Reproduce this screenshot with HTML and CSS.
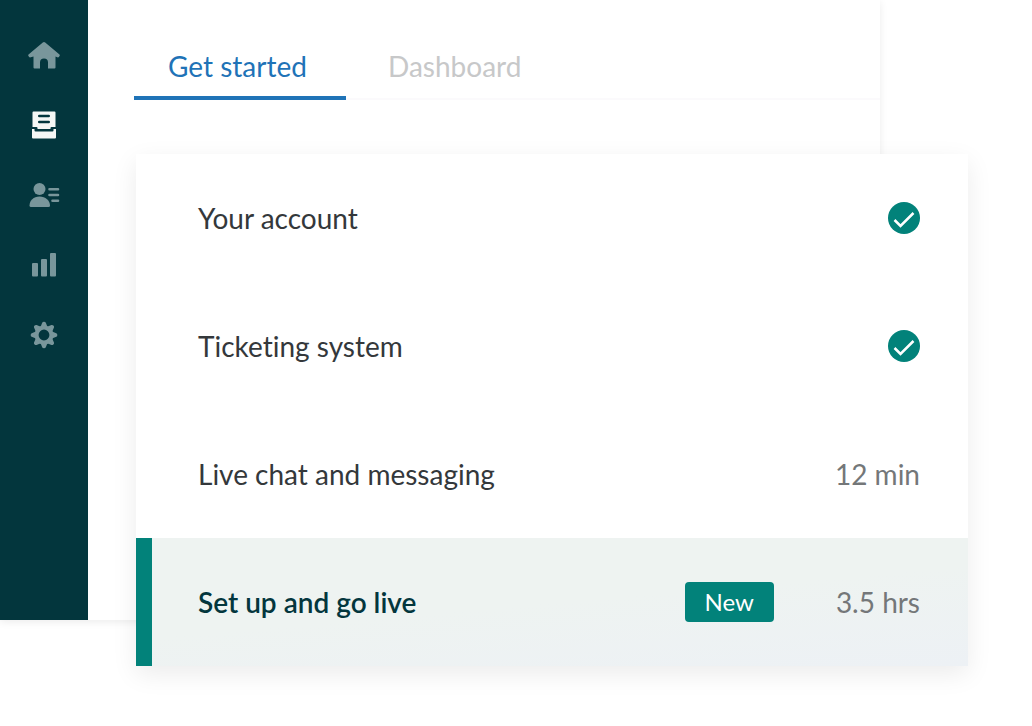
FILE: index.html
```html
<!DOCTYPE html>
<html lang="en">
<head>
  <meta charset="UTF-8">
  <meta name="viewport" content="width=device-width, initial-scale=1">
  <title>Get started</title>
  <link rel="stylesheet" href="styles.css">
</head>
<body>
  <div class="stage">
    <div class="window">
      <nav class="sidebar" aria-label="Main">
        <a href="#" aria-label="Home">
          <svg viewBox="0 0 40 40"><path d="M18.800 7.400Q20 6.400 21.200 7.400L35.500 19.500Q36.300 20.300 35.500 21.100L34.900 22Q34.200 22.700 33.300 22.300L31.500 21.500V32.500Q31.500 33.500 30.500 33.500H24V27.500Q24 23.500 20 23.500T16 27.500V33.500H10.500Q9.500 33.500 9.500 32.500V21.500L6.700 22.300Q5.800 22.700 5.100 22L4.500 21.100Q3.700 20.300 4.500 19.500Z"/></svg>
        </a>
        <a href="#" class="active" aria-label="Tickets">
          <svg viewBox="0 0 40 40">
            <path fill-rule="evenodd" d="M9.500 6.500H30.500Q31.500 6.500 31.500 7.500V22H27.500Q26.500 22 26.500 23V24H13.500V23Q13.500 22 12.500 22H8.500V7.500Q8.500 6.500 9.500 6.500ZM15.200 9.800A1.200 1.200 0 0 0 15.200 12.200H24.800A1.200 1.200 0 0 0 24.800 9.800ZM15.200 15.800A1.200 1.200 0 0 0 15.200 18.200H24.800A1.200 1.200 0 0 0 24.800 15.800Z"/>
            <path d="M8 24H10.500V25.500Q10.500 26.500 11.500 26.500H28.500Q29.500 26.500 29.500 25.500V24H32V32.500Q32 33.500 31 33.500H9Q8 33.500 8 32.500Z"/>
          </svg>
        </a>
        <a href="#" aria-label="Customers">
          <svg viewBox="0 0 40 40">
            <circle cx="15.500" cy="14" r="6"/>
            <path d="M5.500 30.500C5.500 25.500 9.500 21.500 15.500 21.500S26 25.500 26 30.500Q26 32 24.500 32H7Q5.500 32 5.500 30.500Z"/>
            <path class="line" d="M25.500 14.200H34M25.500 20H34M28.500 25.700H34"/>
          </svg>
        </a>
        <a href="#" aria-label="Reporting">
          <svg viewBox="0 0 40 40">
            <rect x="8" y="18" width="6" height="13.500" rx="1"/>
            <rect x="17" y="14" width="6" height="17.500" rx="1"/>
            <rect x="26" y="8" width="6" height="23.500" rx="1"/>
          </svg>
        </a>
        <a href="#" aria-label="Settings">
          <svg viewBox="0 0 40 40">
            <defs><path id="tooth" d="M16.500 12L18.200 7.700Q18.600 6.700 20 6.700T21.800 7.700L23.500 12Z"/></defs>
            <circle class="ring" cx="20" cy="20" r="7.400"/>
            <use href="#tooth"/>
            <use href="#tooth" transform="rotate(45 20 20)"/>
            <use href="#tooth" transform="rotate(90 20 20)"/>
            <use href="#tooth" transform="rotate(135 20 20)"/>
            <use href="#tooth" transform="rotate(180 20 20)"/>
            <use href="#tooth" transform="rotate(225 20 20)"/>
            <use href="#tooth" transform="rotate(270 20 20)"/>
            <use href="#tooth" transform="rotate(315 20 20)"/>
          </svg>
        </a>
      </nav>
      <div class="content">
        <nav class="tabs" aria-label="Views">
          <a href="#" class="tab active">Get started</a>
          <a href="#" class="tab">Dashboard</a>
        </nav>
      </div>
    </div>

    <ul class="card">
      <li class="row">
        <span class="name">Your account</span>
        <svg class="check" viewBox="0 0 32 32" role="img" aria-label="Done"><circle cx="16" cy="16" r="16"/><path d="M6.500 18L12.500 24L25.500 11"/></svg>
      </li>
      <li class="row">
        <span class="name">Ticketing system</span>
        <svg class="check" viewBox="0 0 32 32" role="img" aria-label="Done"><circle cx="16" cy="16" r="16"/><path d="M6.500 18L12.500 24L25.500 11"/></svg>
      </li>
      <li class="row">
        <span class="name">Live chat and messaging</span>
        <span class="time">12 min</span>
      </li>
      <li class="row current">
        <span class="name">Set up and go live</span>
        <span class="badge">New</span>
        <span class="time">3.5 hrs</span>
      </li>
    </ul>
  </div>
</body>
</html>
```
FILE: styles.css
```css
* {
  box-sizing: border-box;
}
body {
  margin: 0;
  background: #fff;
  color: #34383b;
  font-family: Lato, sans-serif;
  font-size: 28px;
  font-variant-ligatures: none;
  line-height: 36px;
}
a {
  color: inherit;
  text-decoration: none;
}

/* the card shares the window's grid cell and lies over it */
.stage {
  display: grid;
  padding-bottom: 60px;
}
.window, .card {
  grid-area: 1 / 1;
}
.window {
  display: flex;
  margin: 0 152px 46px 0;
  background: #fff;
  box-shadow: 0 2px 8px rgba(0, 0, 0, 0.08);
}

.sidebar {
  display: flex;
  flex-direction: column;
  align-items: center;
  gap: 30px;
  width: 88px;
  padding-top: 35px;
  background: #03363d;
  color: #79969b;
}
.sidebar a {
  width: 40px;
  height: 40px;
}
.sidebar .active {
  color: #f5f7f5;
}
.sidebar svg {
  display: block;
  fill: currentColor;
}
.sidebar .line {
  stroke: currentColor;
  stroke-width: 2.6;
  stroke-linecap: round;
}
.sidebar .ring {
  fill: none;
  stroke: currentColor;
  stroke-width: 4;
}

.content {
  flex: 1;
  padding: 48px 0 0 46px;
}
.tabs {
  display: flex;
  gap: 8px;
  box-shadow: inset 0 -2px #fbfafc;
}
.tab {
  min-width: 212px;
  padding: 0 34px 12px;
  border-bottom: 4px solid transparent;
  color: #c7c8c9;
}
.tab.active {
  border-color: #1f73b7;
  color: #1f73b7;
}

.card {
  z-index: 1;
  margin: 154px 64px 0 136px;
  padding: 0;
  list-style: none;
  background: #fff;
  box-shadow: 0 8px 24px rgba(0, 0, 0, 0.08);
}
.row {
  display: flex;
  align-items: center;
  min-height: 128px;
  padding: 0 48px 0 62px;
}
.name {
  flex: 1;
}
.check {
  width: 32px;
  height: 32px;
  fill: #02827a;
}
.check path {
  fill: none;
  stroke: #fff;
  stroke-width: 2.5;
}
.time {
  color: #747779;
}

.current {
  padding-left: 46px;
  border-left: 16px solid #02827a;
  background: linear-gradient(175deg, #eef3f1 50%, #edf1f5);
}
.current .name {
  color: #03363d;
  font-weight: 600;
}
.badge {
  margin-right: 62px;
  padding: 2px 20px;
  border-radius: 4px;
  background: #02827a;
  color: #fff;
  font-size: 24px;
}
```
